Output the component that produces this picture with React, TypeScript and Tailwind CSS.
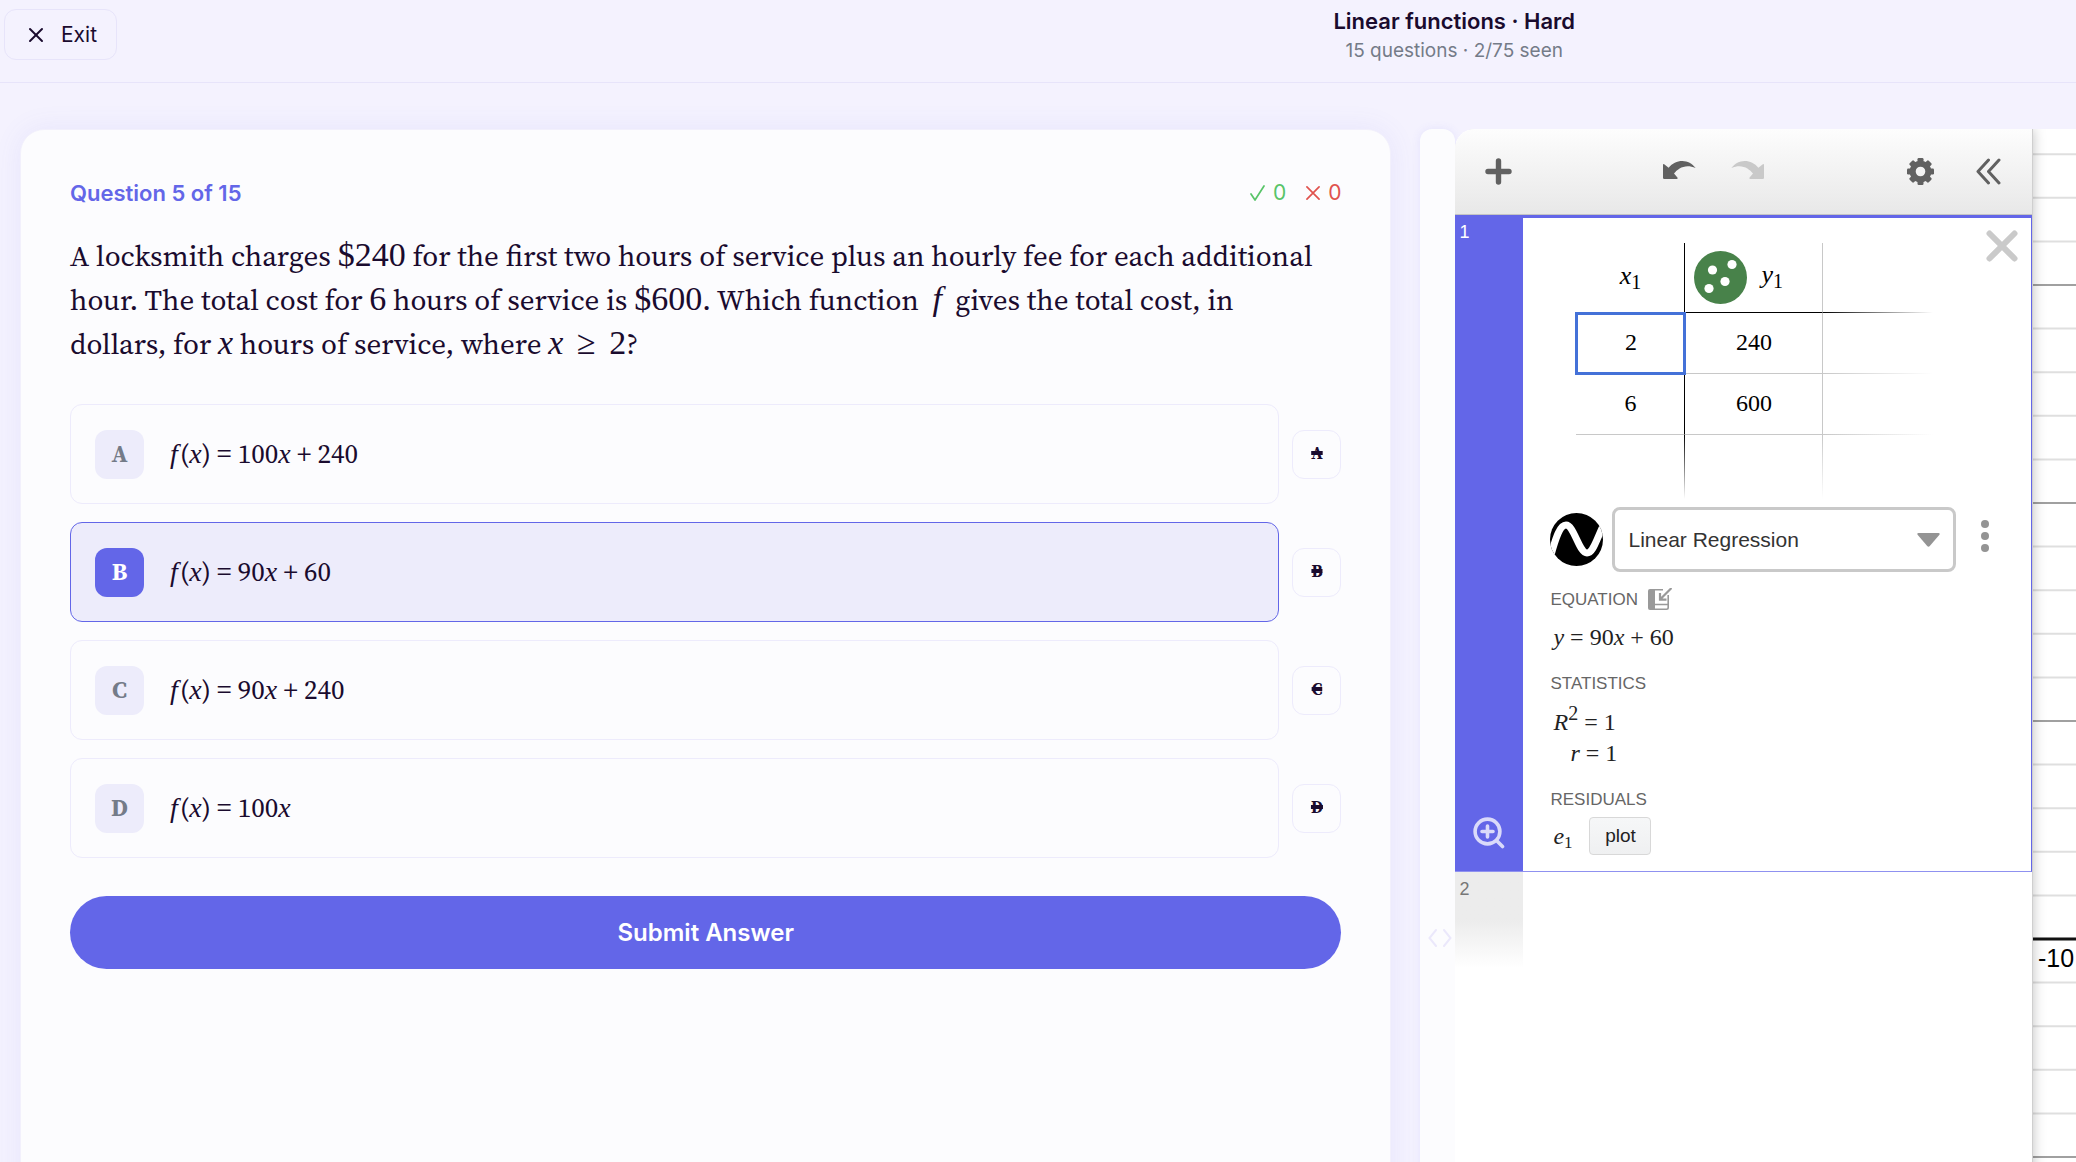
import { useState } from 'react'
import { X } from 'lucide-react'

const serif = "font-['Source_Serif_4','Noto_Serif_CJK_SC','Liberation_Serif',serif]"
const math = "font-['Liberation_Serif',serif]"

const options = [
  { id: 'A', lead: '100', tail: '240' },
  { id: 'B', lead: '90', tail: '60' },
  { id: 'C', lead: '90', tail: '240' },
  { id: 'D', lead: '100', tail: '' },
]

const Header = () => (
  <header className="grid h-[83px] grid-cols-[1fr_auto_1fr] items-start border-b border-[#e7e4fa]">
    <button className="mt-[9px] ml-1 flex h-[51px] w-[113px] items-center gap-[13px] rounded-xl border border-[#e7e4fa] pt-px pl-[19px] text-[21px]">
      <X className="size-6" strokeWidth={2} />
      Exit
    </button>
    <div className="pt-[7px] text-center">
      <h1 className="text-[22px] leading-7 font-semibold">Linear functions · Hard</h1>
      <p className="text-[19px] leading-8 text-[#747b88]">15 questions · 2/75 seen</p>
    </div>
  </header>
)

const Num = ({ children }: { children: React.ReactNode }) => (
  <span className={`${math} text-[34px] leading-0`}>{children}</span>
)

const Var = ({ children }: { children: React.ReactNode }) => (
  <i className={`${math} text-[34px] leading-0`}>{children}</i>
)

const QuestionCard = () => {
  const [selected, setSelected] = useState('B')

  return (
    <section className="rounded-3xl border border-[#f2f0fc] bg-[#fcfcfe] px-[49px] pt-[47px] shadow-[0_0_28px_rgba(99,102,232,0.09)]">
      <div className="flex h-8 items-center justify-between text-[22px]">
        <h2 className="font-semibold text-[#6366e8]">Question 5 of 15</h2>
        <div className="flex items-center gap-5 text-[21px]">
          <span className="flex items-center gap-2 text-[#58c468]">
            <svg className="h-4 w-[15px]" viewBox="0 0 15 16" fill="none" stroke="currentColor" strokeWidth="1.7" strokeLinecap="round" strokeLinejoin="round">
              <path d="M1 9 L5 15 L14 1" />
            </svg>
            0
          </span>
          <span className="flex items-center gap-2 text-[#e0524d]">
            <svg className="size-[14px]" viewBox="0 0 15 15" fill="none" stroke="currentColor" strokeWidth="1.8" strokeLinecap="round">
              <path d="M1 1 L14 14 M14 1 L1 14" />
            </svg>
            0
          </span>
        </div>
      </div>

      <p className={`${serif} mt-[25px] text-[29px] leading-11 whitespace-nowrap`}>
        A locksmith charges <Num>$240</Num> for the first two hours of service plus an hourly fee for each additional
        <br />
        hour. The total cost for <Num>6</Num> hours of service is <Num>$600</Num>. Which function&nbsp; <Var>f</Var>&nbsp; gives the total cost, in
        <br />
        dollars, for <Var>x</Var> hours of service, where <Var>x</Var>&nbsp; <Num>≥</Num>&nbsp; <Num>2</Num>?
      </p>

      <div className={`${serif} mt-[38px] flex flex-col gap-[18px]`}>
        {options.map((o) => {
          const active = o.id === selected
          return (
            <div key={o.id} className="flex items-center gap-[13px]">
              <button
                onClick={() => setSelected(o.id)}
                className={`flex h-[100px] flex-1 items-center gap-[26px] rounded-xl border pl-6 text-left ${active ? 'border-[#6366e8] bg-[#edecfb]' : 'border-[#edebfc]'}`}
              >
                <span className={`flex size-[49px] items-center justify-center rounded-xl text-2xl font-bold ${active ? 'bg-[#6366e8] text-white' : 'bg-[#edecfb] text-[#747b88]'}`}>
                  {o.id}
                </span>
                <span className="text-[27px]">
                  <i className={`${math} text-[28px] leading-0`}>f</i>&#8202;&#8202;(<i className={`${math} text-[28px] leading-0`}>x</i>) = {o.lead}
                  <i className={`${math} text-[28px] leading-0`}>x</i>
                  {o.tail && ` + ${o.tail}`}
                </span>
              </button>
              <button
                aria-label={`Eliminate ${o.id}`}
                className="size-[49px] rounded-xl border border-[#edebfc] text-[17px] font-bold line-through decoration-4"
              >
                {o.id}
              </button>
            </div>
          )
        })}
      </div>

      <button className="mt-[38px] h-[73px] w-full rounded-full bg-[#6366e8] text-2xl font-semibold text-white">
        Submit Answer
      </button>
    </section>
  )
}

const UndoIcon = ({ className }: { className: string }) => (
  <svg className={className} viewBox="0 0 33 18" fill="currentColor">
    <path d="M1.2 3.2 Q0 2.4 0 4 V16.8 Q0 18 1.2 18 H13.6 Q15.4 17.6 14.2 16.2 L11 12.6 C15 7.6 22 2.6 32.6 7 C26 -2.2 13 -2.4 5.6 6.8 Z" />
  </svg>
)

const Gear = () => (
  <svg className="size-[27px]" viewBox="-13.5 -13.5 27 27" fill="#616161">
    <circle r="7.8" fill="none" stroke="#616161" strokeWidth="6" />
    {[0, 45, 90, 135, 180, 225, 270, 315].map((a) => (
      <rect key={a} x="-3" y="-13.5" width="6" height="5" rx="1.2" transform={`rotate(${a})`} />
    ))}
  </svg>
)

const Toolbar = () => (
  <div className="flex h-[86px] items-center border-b border-[#c4c4c4] bg-linear-to-b from-[#fdfdfd] to-[#e8e8e8] pr-[31px] pl-[30px] text-[#616161]">
    <button aria-label="Add item">
      <svg className="size-[27px]" viewBox="0 0 27 27" stroke="currentColor" strokeWidth="5.4" strokeLinecap="round">
        <path d="M13.5 3 V24 M3 13.5 H24" />
      </svg>
    </button>
    <div className="flex flex-1 justify-center gap-[35px] pb-1 pl-2">
      <button aria-label="Undo"><UndoIcon className="h-[18px] w-[33px]" /></button>
      <button aria-label="Redo" className="text-[#c9c9c9]"><UndoIcon className="h-[18px] w-[33px] -scale-x-100" /></button>
    </div>
    <div className="flex gap-[42px]">
      <button aria-label="Settings"><Gear /></button>
      <button aria-label="Hide list">
        <svg className="h-[27px] w-[25px]" viewBox="0 0 25 27" fill="none" stroke="currentColor" strokeWidth="3" strokeLinecap="round" strokeLinejoin="round">
          <path d="M12.5 2 L2 13.5 L12.5 25 M23 2 L12.5 13.5 L23 25" />
        </svg>
      </button>
    </div>
  </div>
)

const DataTable = () => (
  <table className={`${math} ml-[26px] table-fixed border-separate border-spacing-0 text-center text-2xl text-black`}>
    <colgroup>
      <col className="w-[109px]" />
      <col className="w-[138px]" />
      <col className="w-[110px]" />
    </colgroup>
    <thead>
      <tr className="h-[70px] text-[26px]">
        <th className="border-r border-black p-0 pb-1 font-normal"><i>x</i><sub className="text-xl">1</sub></th>
        <th className="border-r border-b border-r-[#c8c8c8] border-b-black p-0 font-normal">
          <div className="flex items-center gap-[14px] pl-[9px]">
            <svg className="size-[53px]" viewBox="0 0 53 53">
              <circle cx="26.5" cy="26.5" r="26.5" fill="#48824a" />
              <g fill="#fff">
                <circle cx="18.5" cy="19" r="4.6" />
                <circle cx="38" cy="13.5" r="4.6" />
                <circle cx="31" cy="30.5" r="4.6" />
                <circle cx="15" cy="37.5" r="4.6" />
              </g>
            </svg>
            <span className="pb-1"><i>y</i><sub className="text-xl">1</sub></span>
          </div>
        </th>
        <th className="bg-[linear-gradient(to_right,#000,transparent)] bg-[length:100%_1px] bg-bottom bg-no-repeat" />
      </tr>
    </thead>
    <tbody>
      <tr className="h-[61px]">
        <td className="p-0 pb-[3px] outline-3 -outline-offset-2 outline-[#4471d8]">2</td>
        <td className="border-r border-b border-[#c8c8c8] p-0 pb-[3px]">240</td>
        <td className="bg-[linear-gradient(to_right,#c8c8c8,transparent)] bg-[length:100%_1px] bg-bottom bg-no-repeat" />
      </tr>
      <tr className="h-[61px]">
        <td className="border-r border-b border-r-black border-b-[#c8c8c8] p-0 pb-[3px]">6</td>
        <td className="border-r border-b border-[#c8c8c8] p-0 pb-[3px]">600</td>
        <td className="bg-[linear-gradient(to_right,#c8c8c8,transparent)] bg-[length:100%_1px] bg-bottom bg-no-repeat" />
      </tr>
      <tr className="h-16">
        <td className="bg-[linear-gradient(to_bottom,#000,transparent)] bg-[length:1px_100%] bg-right bg-no-repeat" />
        <td className="bg-[linear-gradient(to_bottom,#c8c8c8,transparent)] bg-[length:1px_100%] bg-right bg-no-repeat" />
        <td />
      </tr>
    </tbody>
  </table>
)

const Regression = () => (
  <div className={`${math} text-2xl text-[#222]`}>
    <div className="mt-2 flex items-center">
      <svg className="size-[53px]" viewBox="0 0 53 53">
        <clipPath id="disc"><circle cx="26.5" cy="26.5" r="26.5" /></clipPath>
        <g clipPath="url(#disc)">
          <rect width="53" height="53" />
          <path d="M1 42 C6 24 10 12 16 12 C24 12 29 40 37 40 C43 40 46 28 53 13" fill="none" stroke="#fff" strokeWidth="7" />
        </g>
      </svg>
      <div className="relative ml-[9px]">
        <select
          aria-label="Regression type"
          className="h-[65px] w-[344px] appearance-none rounded-lg border-3 border-[#c9c9c9] bg-white pl-[13px] font-['Liberation_Sans',sans-serif] text-[21px] text-[#333]"
        >
          <option>Linear Regression</option>
        </select>
        <svg className="pointer-events-none absolute top-[26px] right-4 h-[14px] w-[23px]" viewBox="0 0 23 14" fill="#949494">
          <path d="M1.5 0 H21.5 Q23.5 0.4 22.2 2 L12.8 13 Q11.5 14.4 10.2 13 L0.8 2 Q-0.5 0.4 1.5 0 Z" />
        </svg>
      </div>
      <button aria-label="More options" className="mb-[7px] ml-[25px]">
        <svg className="h-8 w-2" viewBox="0 0 8 32" fill="#949494">
          <circle cx="4" cy="4" r="4" />
          <circle cx="4" cy="16" r="4" />
          <circle cx="4" cy="28" r="4" />
        </svg>
      </button>
    </div>

    <h3 className="mt-4 flex h-6 items-center gap-[10px] font-['Liberation_Sans',sans-serif] text-[17px] text-[#666]">
      EQUATION
      <button aria-label="Copy equation">
        <svg className="h-6 w-6" viewBox="0 0 24 24" fill="none" stroke="#999" strokeWidth="1.6">
          <path d="M2 1 H7 V22 H2 Q0 22 0 20 V3 Q0 1 2 1 Z" fill="#999" stroke="none" />
          <path d="M6 1.8 H15 M20.2 7 V19.5 Q20.2 21.2 18.5 21.2 H6 M7 16.5 H20" />
          <path d="M23.5 0 L12.5 11 M12 5 V11.6 H18.5" strokeWidth="2.2" />
        </svg>
      </button>
    </h3>
    <p className="mt-[9px] h-8 pl-[3px] leading-8"><i>y</i> = 90<i>x</i> + 60</p>

    <h3 className="mt-[19px] h-6 font-['Liberation_Sans',sans-serif] text-[17px] leading-6 text-[#666]">STATISTICS</h3>
    <p className="mt-[10px] h-8 pl-[3px] leading-8"><i>R</i><sup className="text-[20px]">2</sup> = 1</p>
    <p className="h-[30px] pl-5 leading-[30px]"><i>r</i> = 1</p>

    <h3 className="mt-5 h-6 font-['Liberation_Sans',sans-serif] text-[17px] leading-6 text-[#666]">RESIDUALS</h3>
    <div className="mt-[5px] mb-4 flex items-center gap-4">
      <span className="w-[23px] pl-[3px] leading-[30px] whitespace-nowrap"><i>e</i><sub className="text-[17px]">1</sub></span>
      <button className="h-[38px] w-[62px] rounded border border-[#d8d8d8] bg-linear-to-b from-[#f6f7f8] to-[#eff0f1] font-['Liberation_Sans',sans-serif] text-[19px] text-[#222]">
        plot
      </button>
    </div>
  </div>
)

const ExpressionList = () => (
  <div className="z-10 w-[578px] shrink-0 border-r border-[#cfcfcf] bg-white shadow-[0_0_12px_rgba(0,0,0,0.25)]">
    <Toolbar />
    <div className="flex border-t-3 border-r border-b border-[#6366e8] border-b-[#8f91f0]">
      <div className="flex w-[68px] flex-col justify-between bg-[#6366e8] pb-[22px] font-['Liberation_Sans',sans-serif] text-lg text-white">
        <span className="pl-1">1</span>
        <button aria-label="Zoom to fit" className="ml-[18px]">
          <svg className="size-8" viewBox="0 0 32 32" fill="none" stroke="#dadafa" strokeWidth="3.6" strokeLinecap="round">
            <circle cx="14.5" cy="14.5" r="12.4" />
            <path d="M24 24 L29.5 29.5 M14.5 9 V20 M9 14.5 H20" />
          </svg>
        </button>
      </div>
      <div className="relative flex-1 pt-[25px] pl-[27px]">
        <button aria-label="Delete item" className="absolute top-[11px] right-3">
          <svg className="size-[34px]" viewBox="0 0 34 34" stroke="#cacaca" strokeWidth="6" strokeLinecap="round">
            <path d="M4.5 4.5 L29.5 29.5 M29.5 4.5 L4.5 29.5" />
          </svg>
        </button>
        <DataTable />
        <Regression />
      </div>
    </div>
    <div className="h-24 w-[68px] bg-linear-to-b from-[#ececec] from-50% to-white pt-[3px] pl-1 font-['Liberation_Sans',sans-serif] text-lg text-[#777]">
      2
    </div>
  </div>
)

// y of the x-axis and the spacing of the minor lines
const AXIS = 810
const STEP = 43.6

const Graph = () => (
  <svg className="h-full flex-1 bg-white">
    {Array.from({ length: 37 }, (_, i) => i - 18).map((n) => (
      <line
        key={n}
        x1="0"
        x2="100%"
        y1={AXIS + n * STEP}
        y2={AXIS + n * STEP}
        stroke={n === 0 ? '#111' : n % 5 === 0 ? '#a0a0a0' : '#dfdfdf'}
        strokeWidth={n === 0 ? 3 : 2}
      />
    ))}
    <text x="5" y={AXIS + 28} className="font-['Liberation_Sans',sans-serif] text-[25px]">-10</text>
  </svg>
)

const Calculator = () => (
  <section className="flex">
    <div className="flex w-[35px] items-center justify-center rounded-t-xl bg-[#fcfcfe] pl-1 shadow-[0_0_10px_rgba(99,102,232,0.1)]">
      <svg className="h-[18px] w-6" viewBox="0 0 24 18" fill="none" stroke="#ebe8fb" strokeWidth="2" strokeLinecap="round">
        <path d="M8 1 L1.5 9 L8 17 M16 1 L22.5 9 L16 17" />
      </svg>
    </div>
    <div className="flex flex-1 overflow-hidden rounded-t-[20px] bg-white">
      <ExpressionList />
      <Graph />
    </div>
  </section>
)

const App = () => (
  <div className="h-screen overflow-hidden bg-[#f4f2fe] font-['Inter',sans-serif] text-[#1a0b2e]">
    <div className="w-[140.1%]">
      <Header />
      <main className="grid min-h-[1664px] grid-cols-[483fr_517fr] gap-[29px] px-5 pt-[46px]">
        <QuestionCard />
        <Calculator />
      </main>
    </div>
  </div>
)

export default App
